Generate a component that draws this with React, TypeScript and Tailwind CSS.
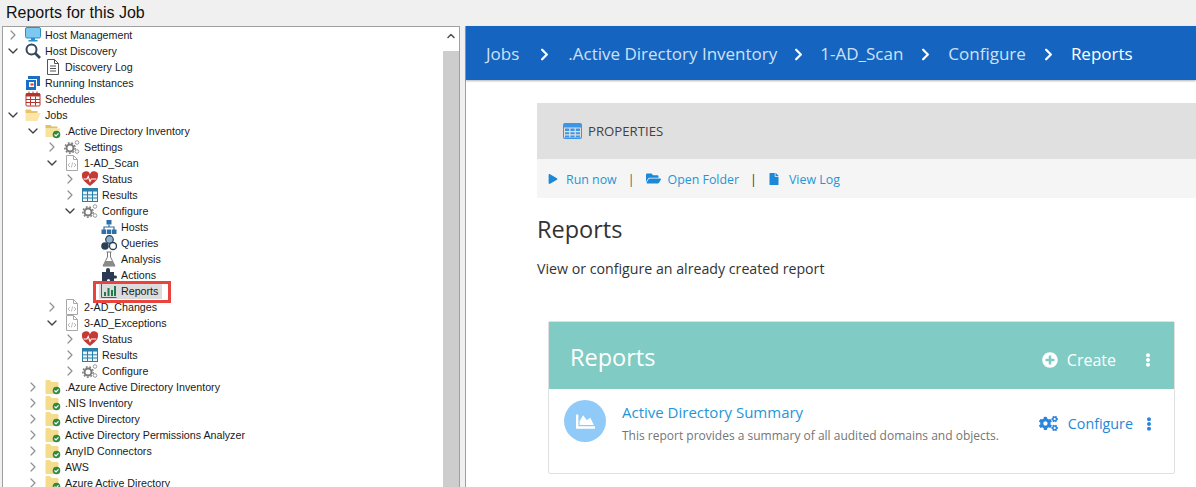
import React from "react";
import { ChevronRight, ChevronDown, ChevronUp } from "lucide-react";
import { FaCogs, FaPlay, FaFolderOpen, FaFile, FaPlusCircle, FaEllipsisV, FaChartArea } from "react-icons/fa";

type IconName = "monitor" | "search" | "doc" | "running" | "cal" | "folderOpen" | "jobOpen" | "job" | "gears" | "code" | "heart" | "table" | "hosts" | "queries" | "flask" | "puzzle" | "bars";

function TreeIcon({ name }: { name: IconName }) {
  const common = { width: 16, height: 16, viewBox: "0 0 16 16", className: "block shrink-0" };
  switch (name) {
    case "monitor":
      return (
        <svg {...common}>
          <rect x="0.5" y="0.500" width="15" height="10.500" rx="1.500" fill="#7cc8f0" stroke="#2a8fc9" />
          <rect x="6" y="11" width="4" height="2.500" fill="#2a8fc9" />
          <rect x="3.500" y="13" width="9" height="1.500" fill="#2a8fc9" />
        </svg>
      );
    case "search":
      return (
        <svg {...common}>
          <circle cx="6.500" cy="6.500" r="5" fill="none" stroke="#34495e" strokeWidth="2" />
          <path d="M10 10l5 5" stroke="#34495e" strokeWidth="2.600" />
        </svg>
      );
    case "doc":
      return (
        <svg {...common}>
          <path d="M2.500 .5h7l4 4v11h-11z" fill="#fff" stroke="#555" />
          <path d="M9.500 .5v4h4M5 7h6M5 9.500h6M5 12h6" fill="none" stroke="#555" />
        </svg>
      );
    case "running":
      return (
        <svg {...common}>
          <path d="M3 1h12v10h-3V4H3z" fill="#1b6fc2" />
          <path d="M1 5h10v10H1z" fill="#1b6fc2" />
          <rect x="4" y="7" width="5" height="5" fill="#fff" />
          <rect x="5.500" y="8.500" width="3" height="2" fill="#d9363e" />
        </svg>
      );
    case "cal":
      return (
        <svg {...common}>
          <rect x="1" y="2.500" width="14" height="12.500" rx="1" fill="#fff" stroke="#b5342c" />
          <rect x="1" y="2.500" width="14" height="3" fill="#b5342c" />
          <path d="M4 .5v3M8 .5v3M12 .5v3M1 8.500h14M1 11.500h14M5.500 5.500v9M10.500 5.500v9" stroke="#b5342c" fill="none" />
        </svg>
      );
    case "folderOpen":
      return (
        <svg {...common}>
          <path d="M.5 2.500h5l1.500 1.500h5.500v2H.5z" fill="#e8c46a" />
          <path d="M.5 14V6h15l-3 8z" fill="#fbe6a8" />
        </svg>
      );
    case "jobOpen":
      return (
        <svg {...common}>
          <path d="M.5 2h5l1.500 1.500h5.500v2H.5z" fill="#dcc36a" />
          <path d="M.5 14V5.500h15l-3 8.500z" fill="#f6e49a" />
          <circle cx="11.500" cy="11.500" r="3.800" fill="#2e8b3d" />
          <path d="M9.500 11.500l1.500 1.500 2.500-2.700" fill="none" stroke="#fff" strokeWidth="1.200" />
        </svg>
      );
    case "job":
      return (
        <svg {...common}>
          <path d="M.5 2a1 1 0 0 1 1-1h3.500l1.500 2h6a1 1 0 0 1 1 1v10a1 1 0 0 1-1 1h-11a1 1 0 0 1-1-1z" fill="#f5dc8a" />
          <circle cx="11.500" cy="11.500" r="3.800" fill="#2e8b3d" />
          <path d="M9.500 11.500l1.500 1.500 2.500-2.700" fill="none" stroke="#fff" strokeWidth="1.200" />
        </svg>
      );
    case "gears":
      return (
        <svg {...common}>
          <circle cx="6" cy="9" r="3.500" fill="none" stroke="#7a7a7a" strokeWidth="2" />
          <circle cx="6" cy="9" r="5.200" fill="none" stroke="#7a7a7a" strokeWidth="1.400" strokeDasharray="1.800 1.800" />
          <circle cx="13" cy="3.500" r="1.800" fill="none" stroke="#9a9a9a" strokeWidth="1" />
          <circle cx="13" cy="12.500" r="1.800" fill="none" stroke="#9a9a9a" strokeWidth="1" />
        </svg>
      );
    case "code":
      return (
        <svg {...common}>
          <path d="M2.500 .5h7l4 4v11h-11z" fill="#fff" stroke="#a8a8a8" />
          <path d="M9.500 .5v4h4" fill="none" stroke="#a8a8a8" />
          <path d="M6 8l-2 2 2 2M10 8l2 2-2 2M8.700 7.500l-1.400 5" fill="none" stroke="#a8a8a8" strokeWidth=".8" />
        </svg>
      );
    case "heart":
      return (
        <svg {...common}>
          <path d="M8 15C3 11 0 8.500 0 5a4 4 0 0 1 8-1.500A4 4 0 0 1 16 5c0 3.500-3 6-8 10z" fill="#c43a35" />
          <path d="M1.500 8h3.500l1.200-2.500 1.800 5 1.300-2.500h5" fill="none" stroke="#fff" strokeWidth="1.100" />
        </svg>
      );
    case "table":
      return (
        <svg {...common}>
          <rect x=".5" y="1.500" width="15" height="13" fill="#eaf5fb" stroke="#2d7fa8" />
          <rect x=".5" y="1.500" width="15" height="3" fill="#2d7fa8" />
          <path d="M5.500 4v10M10.500 4v10M1 7.800h14M1 11h14" stroke="#2d7fa8" fill="none" />
        </svg>
      );
    case "hosts":
      return (
        <svg {...common}>
          <rect x="5.500" y="1" width="5" height="4.500" fill="#2f6fa8" />
          <path d="M8 5.500V8M3 11V8h10v3" fill="none" stroke="#2f6fa8" strokeWidth="1.200" />
          <rect x=".5" y="10.500" width="4.500" height="4.500" fill="#2f6fa8" />
          <rect x="5.800" y="10.500" width="4.500" height="4.500" fill="#2f6fa8" />
          <rect x="11" y="10.500" width="4.500" height="4.500" fill="#2f6fa8" />
        </svg>
      );
    case "queries":
      return (
        <svg {...common}>
          <circle cx="8.500" cy="4.500" r="3.800" fill="#8db3cf" stroke="#2b3f56" strokeWidth="1.200" />
          <circle cx="4" cy="11" r="3.800" fill="#2b3f56" />
          <circle cx="12" cy="11" r="3.500" fill="#fff" stroke="#2b3f56" strokeWidth="1.300" />
        </svg>
      );
    case "flask":
      return (
        <svg {...common}>
          <path d="M5.500 1h5M6.500 1v5L2 15h12L9.500 6V1" fill="none" stroke="#777" />
          <path d="M4.500 10h7l2.500 5H2z" fill="#8a8a8a" />
        </svg>
      );
    case "puzzle":
      return (
        <svg {...common}>
          <path d="M1 5h4V3a2 2 0 1 1 4 0v2h4v3.500h1.500a1.500 1.500 0 1 1 0 3H13V15H9v-1.500a1.500 1.500 0 1 0-3 0V15H1z" fill="#2b3a52" />
        </svg>
      );
    case "bars":
      return (
        <svg {...common}>
          <path d="M.5 1v13.500h15" fill="none" stroke="#1f7a4d" />
          <path d="M3 9h2v4H3zM6.500 5h2v8h-2zM10 7h2v6h-2zM13 3h2v10h-2z" fill="#1f7a4d" />
        </svg>
      );
  }
}

type Row = { level: number; chev?: "r" | "d"; icon: IconName; text: string; selected?: boolean };

const rows: Row[] = [
  { level: 0, chev: "r", icon: "monitor", text: "Host Management" },
  { level: 0, chev: "d", icon: "search", text: "Host Discovery" },
  { level: 1, icon: "doc", text: "Discovery Log" },
  { level: 0, icon: "running", text: "Running Instances" },
  { level: 0, icon: "cal", text: "Schedules" },
  { level: 0, chev: "d", icon: "folderOpen", text: "Jobs" },
  { level: 1, chev: "d", icon: "jobOpen", text: ".Active Directory Inventory" },
  { level: 2, chev: "r", icon: "gears", text: "Settings" },
  { level: 2, chev: "d", icon: "code", text: "1-AD_Scan" },
  { level: 3, chev: "r", icon: "heart", text: "Status" },
  { level: 3, chev: "r", icon: "table", text: "Results" },
  { level: 3, chev: "d", icon: "gears", text: "Configure" },
  { level: 4, icon: "hosts", text: "Hosts" },
  { level: 4, icon: "queries", text: "Queries" },
  { level: 4, icon: "flask", text: "Analysis" },
  { level: 4, icon: "puzzle", text: "Actions" },
  { level: 4, icon: "bars", text: "Reports", selected: true },
  { level: 2, chev: "r", icon: "code", text: "2-AD_Changes" },
  { level: 2, chev: "d", icon: "code", text: "3-AD_Exceptions" },
  { level: 3, chev: "r", icon: "heart", text: "Status" },
  { level: 3, chev: "r", icon: "table", text: "Results" },
  { level: 3, chev: "r", icon: "gears", text: "Configure" },
  { level: 1, chev: "r", icon: "job", text: ".Azure Active Directory Inventory" },
  { level: 1, chev: "r", icon: "job", text: ".NIS Inventory" },
  { level: 1, chev: "r", icon: "job", text: "Active Directory" },
  { level: 1, chev: "r", icon: "job", text: "Active Directory Permissions Analyzer" },
  { level: 1, chev: "r", icon: "job", text: "AnyID Connectors" },
  { level: 1, chev: "r", icon: "job", text: "AWS" },
  { level: 1, chev: "r", icon: "job", text: "Azure Active Directory" },
];

const indent = ["pl-[4px]", "pl-[24px]", "pl-[43px]", "pl-[61px]", "pl-[80px]"];

function TreeRow({ row }: { row: Row }) {
  return (
    <div className={`flex h-4 shrink-0 items-center ${indent[row.level]}`}>
      <span className="flex w-3 shrink-0 justify-center">
        {row.chev === "r" && <ChevronRight size={16} strokeWidth={1.800} className="shrink-0 text-[#909090]" />}
        {row.chev === "d" && <ChevronDown size={16} strokeWidth={2} className="shrink-0 text-[#404040]" />}
      </span>
      {row.selected ? (
        <span className="relative ml-[4px] flex h-4 items-center bg-[#dcdcdc] pl-[2px] pr-1">
          <TreeIcon name={row.icon} />
          <span className="ml-1 whitespace-nowrap">{row.text}</span>
          <span className="absolute -bottom-[4px] -left-[6px] -right-[9px] -top-[2px] border-[3px] border-[#e8433d]" />
        </span>
      ) : (
        <>
          <span className="ml-[6px]">
            <TreeIcon name={row.icon} />
          </span>
          <span className="ml-1 whitespace-nowrap">{row.text}</span>
        </>
      )}
    </div>
  );
}

function Sep({ spacing }: { spacing: string }) {
  return <ChevronRight size={19} strokeWidth={2.800} className={`${spacing} text-white`} />;
}

export default function App() {
  return (
    <div className="flex h-[487px] w-[1196px] flex-col overflow-hidden bg-[#f0f0f0]">
      <div className="flex h-[26px] shrink-0 items-center pl-[6px] font-['Liberation_Sans',sans-serif] text-[16px] text-[#111]">
        Reports for this Job
      </div>
      <div className="flex min-h-0 flex-1">
        <div className="ml-[2px] flex w-[458px] shrink-0 border-l border-r border-t border-[#a0a0a0] bg-white">
          <div className="flex min-w-0 flex-1 flex-col overflow-hidden font-['Liberation_Sans',sans-serif] text-[10.700px] leading-4 text-[#1a1a1a]">
            {rows.map((r, i) => (
              <TreeRow key={i} row={r} />
            ))}
          </div>
          <div className="flex w-4 shrink-0 flex-col bg-[#f0f0f0]">
            <div className="flex h-6 items-start justify-center bg-white pt-[3px]">
              <ChevronUp size={12} strokeWidth={3} className="text-[#505050]" />
            </div>
            <div className="flex-1 bg-[#cdcdcd]" />
          </div>
        </div>
        <div className="ml-[5px] flex min-w-0 flex-1 flex-col border-l border-[#a0a0a0] bg-white font-['Open_Sans',sans-serif]">
          <div className="flex h-[54px] shrink-0 items-center bg-[#1565c0] pl-5 pt-[2px] text-[17px] text-[#cfe0f4] shadow-[0_1px_2px_rgba(0,0,0,0.3)]">
            <span>Jobs</span>
            <Sep spacing="ml-[16px] mr-[14px]" />
            <span>.Active Directory Inventory</span>
            <Sep spacing="mx-[12px]" />
            <span>1-AD_Scan</span>
            <Sep spacing="mx-[13px]" />
            <span>Configure</span>
            <Sep spacing="mx-[13px]" />
            <span className="text-white">Reports</span>
          </div>
          <div className="flex flex-1 flex-col pl-[71px] pt-[23px]">
            <div className="flex h-[56px] items-center bg-[#e0e0e0] pl-[26px] pt-[2px] text-[13.200px] text-[#424242]">
              <svg width="19" height="16" viewBox="0 0 19 16" className="-mt-[2px] mr-[6px]">
                <rect width="19" height="16" rx="2" fill="#3d95e6" />
                <path d="M1 4.500h17v10H1z" fill="#e0e0e0" />
                <path d="M2 5.500h4.200v2.500H2zM7.400 5.500h4.200v2.500H7.400zM12.800 5.500H17v2.500h-4.200zM2 9.200h4.200v2H2zM7.400 9.200h4.200v2H7.400zM12.800 9.200H17v2h-4.200zM2 12.400h4.200v1.800H2zM7.400 12.400h4.200v1.800H7.400zM12.800 12.400H17v1.800h-4.200z" fill="#3d95e6" />
              </svg>
              PROPERTIES
            </div>
            <div className="flex h-[39px] items-center bg-[#f5f5f5] pl-[11px] pt-[3px] text-[12.400px] text-[#1e96d8]">
              <FaPlay size={10} className="-mt-[3px] mr-[8px] text-[#1e88d8]" />
              <span>Run now</span>
              <span className="mx-[11px] text-[#555]">|</span>
              <FaFolderOpen size={15} className="-mt-[3px] mr-[7px] text-[#1e88d8]" />
              <span>Open Folder</span>
              <span className="mx-[11px] text-[#333]">|</span>
              <FaFile size={12} className="-mt-[3px] mr-[9px] text-[#1e88d8]" />
              <span>View Log</span>
            </div>
            <h1 className="mt-[15px] text-[23.500px] leading-8 text-[#333]">Reports</h1>
            <p className="mt-[14px] text-[14.200px] leading-5 text-[#333]">View or configure an already created report</p>
            <div className="ml-[11px] mr-[21px] mt-[42px] h-[153px] shrink-0 rounded-[2px] border border-[#e0e0e0] bg-white">
              <div className="flex h-[67px] items-center bg-[#80cbc4] pl-[21px] pr-[19px] text-white">
                <span className="flex-1 pt-[4px] text-[23.500px]">Reports</span>
                <span className="flex items-center pt-[8px]">
                  <FaPlusCircle size={16} className="mr-[9px]" />
                  <span className="text-[16px]">Create</span>
                  <FaEllipsisV size={14} className="ml-[25px]" />
                </span>
              </div>
              <div className="flex items-start pl-[15px] pr-[18px] pt-[11px]">
                <div className="flex h-[42px] w-[42px] shrink-0 items-center justify-center rounded-full bg-[#90caf9]">
                  <FaChartArea size={19} className="text-white" />
                </div>
                <div className="ml-4 min-w-0 flex-1">
                  <div className="pt-[2px] text-[15px] leading-5 text-[#1e96d8]">Active Directory Summary</div>
                  <div className="mt-[6px] text-[12px] leading-4 text-[#757575]">
                    This report provides a summary of all audited domains and objects.
                  </div>
                </div>
                <div className="mt-[13px] flex items-center text-[#1e88d8]">
                  <FaCogs size={19} className="mr-[10px] text-[#2a85e0]" />
                  <span className="text-[14.300px]">Configure</span>
                  <FaEllipsisV size={14} className="ml-[9px] text-[#2a85e0]" />
                </div>
              </div>
            </div>
          </div>
        </div>
      </div>
    </div>
  );
}
